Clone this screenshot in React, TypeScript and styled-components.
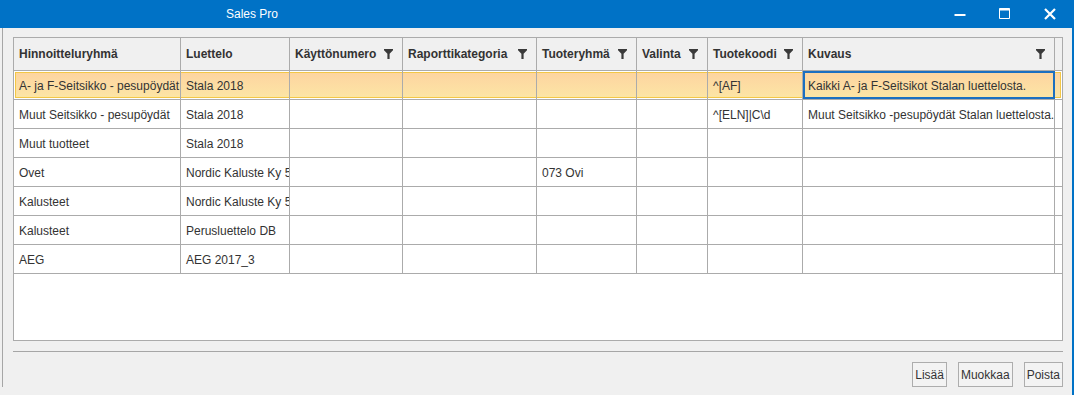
import styled, { createGlobalStyle } from 'styled-components';

const GlobalStyle = createGlobalStyle`
  html, body {
    margin: 0;
    padding: 0;
    background: #f0f0f0;
  }
  body {
    font-family: "Segoe UI", "Liberation Sans", Arial, sans-serif;
    font-size: 12px;
    color: #333;
  }
`;

const COLS = '167px 109px 113px 134px 100px 71px 95px 252px 7px';

interface Column {
  title: string;
  filter: boolean;
}

const columns: Column[] = [
  { title: 'Hinnoitteluryhmä', filter: false },
  { title: 'Luettelo', filter: false },
  { title: 'Käyttönumero', filter: true },
  { title: 'Raporttikategoria', filter: true },
  { title: 'Tuoteryhmä', filter: true },
  { title: 'Valinta', filter: true },
  { title: 'Tuotekoodi', filter: true },
  { title: 'Kuvaus', filter: true },
];

const rows: string[][] = [
  ['A- ja F-Seitsikko - pesupöydät', 'Stala 2018', '', '', '', '', '^[AF]', 'Kaikki A- ja F-Seitsikot Stalan luettelosta.'],
  ['Muut Seitsikko - pesupöydät', 'Stala 2018', '', '', '', '', '^[ELN]|C\\d', 'Muut Seitsikko -pesupöydät Stalan luettelosta.'],
  ['Muut tuotteet', 'Stala 2018', '', '', '', '', '', ''],
  ['Ovet', 'Nordic Kaluste Ky 5', '', '', '073 Ovi', '', '', ''],
  ['Kalusteet', 'Nordic Kaluste Ky 5', '', '', '', '', '', ''],
  ['Kalusteet', 'Perusluettelo DB', '', '', '', '', '', ''],
  ['AEG', 'AEG 2017_3', '', '', '', '', '', ''],
];

const FilterIcon = () => (
  <svg width="9" height="10" viewBox="0 0 9 10">
    <path d="M0 0h9v1.3L5.6 4.8V10H3.4V4.8L0 1.3z" fill="#3a3a3a" />
  </svg>
);

const App = () => {
  return (
    <Window>
      <GlobalStyle />
      <TitleBar>
        <Title>Sales Pro</Title>
        <WinButtons>
          <WinButton>
            <svg width="12" height="12" viewBox="0 0 12 12">
              <rect x="0.5" y="6" width="11" height="2" fill="#fff" />
            </svg>
          </WinButton>
          <WinButton>
            <svg width="12" height="12" viewBox="0 0 12 12">
              <path d="M0.5 0.5h10v10h-10z" fill="none" stroke="#fff" strokeWidth="1" />
              <rect x="0.5" y="0.5" width="10" height="2" fill="#fff" />
            </svg>
          </WinButton>
          <WinButton>
            <svg width="12" height="12" viewBox="0 0 12 12">
              <path d="M1 1L11 11M11 1L1 11" stroke="#fff" strokeWidth="2.2" />
            </svg>
          </WinButton>
        </WinButtons>
      </TitleBar>
      <Body>
        <Content>
          <Grid>
            <HeaderRow>
              {columns.map((c) => (
                <HeaderCell key={c.title}>
                  <span>{c.title}</span>
                  {c.filter && <FilterIcon />}
                </HeaderCell>
              ))}
              <HeaderCell />
            </HeaderRow>
            {rows.map((r, i) => (
              <Row key={i} $selected={i === 0}>
                {r.map((v, j) => (
                  <Cell key={j} $focused={i === 0 && j === 7}>
                    {v}
                  </Cell>
                ))}
                <Cell />
              </Row>
            ))}
          </Grid>
          <Separator />
          <Actions>
            <Button>Lisää</Button>
            <Button>Muokkaa</Button>
            <Button>Poista</Button>
          </Actions>
        </Content>
      </Body>
    </Window>
  );
};

const Window = styled.div`
  width: 1074px;
  height: 395px;
  box-sizing: border-box;
  border-right: 2px solid #0072c6;
  display: flex;
  flex-direction: column;
  overflow: hidden;
`;

const TitleBar = styled.div`
  height: 28px;
  background: #0072c6;
  display: flex;
  align-items: center;
  color: #fff;
`;

const Title = styled.div`
  padding-left: 226px;
  font-size: 12px;
  flex: 1;
`;

const WinButtons = styled.div`
  display: flex;
  height: 100%;
`;

const WinButton = styled.div`
  width: 45px;
  height: 100%;
  display: flex;
  align-items: center;
  justify-content: center;
`;

const Body = styled.div`
  flex: 1;
  padding: 0 0 8px 2px;
  display: flex;
`;

const Content = styled.div`
  flex: 1;
  border-left: 1px solid #a6a6a6;
  padding: 9px 9px 0 10px;
  display: flex;
  flex-direction: column;
`;

const Grid = styled.div`
  height: 304px;
  box-sizing: border-box;
  border: 1px solid #ababab;
  background: #fff;
`;

const HeaderRow = styled.div`
  display: grid;
  grid-template-columns: ${COLS};
  height: 33px;
  box-sizing: border-box;
  border-bottom: 1px solid #ababab;
  background: #f0f0f0;
`;

const HeaderCell = styled.div`
  display: flex;
  align-items: center;
  justify-content: space-between;
  padding: 0 9px 0 5px;
  border-right: 1px solid #ababab;
  font-weight: bold;
  color: #333;
  white-space: nowrap;
  overflow: hidden;
  &:last-child {
    border-right: none;
    padding: 0;
  }
`;

const Row = styled.div<{ $selected?: boolean }>`
  display: grid;
  grid-template-columns: ${COLS};
  height: 29px;
  box-sizing: border-box;
  border-bottom: 1px solid #ababab;
  background: ${(p) => (p.$selected ? 'linear-gradient(#fdd3a0, #fce6a5)' : '#fff')};
  box-shadow: ${(p) => (p.$selected ? 'inset 0 0 0 1px #fff, inset 0 0 0 2px #f3c746' : 'none')};
`;

const Cell = styled.div<{ $focused?: boolean }>`
  display: flex;
  align-items: center;
  padding: 1px 0 0 5px;
  border-right: 1px solid #ababab;
  white-space: nowrap;
  overflow: hidden;
  color: #333;
  outline: ${(p) => (p.$focused ? '2px solid #1c6fc0' : 'none')};
  outline-offset: -2px;
  &:last-child {
    border-right: none;
    padding: 0;
  }
`;

const Separator = styled.div`
  height: 1px;
  background: #a6a6a6;
  margin-top: 10px;
`;

const Actions = styled.div`
  display: flex;
  justify-content: flex-end;
  gap: 11px;
  margin-top: 10px;
`;

const Button = styled.button`
  height: 25px;
  padding: 0 2px;
  border: 1px solid #adadad;
  background: #f3f3f3;
  font-family: inherit;
  font-size: 12px;
  color: #333;
`;

export default App;
